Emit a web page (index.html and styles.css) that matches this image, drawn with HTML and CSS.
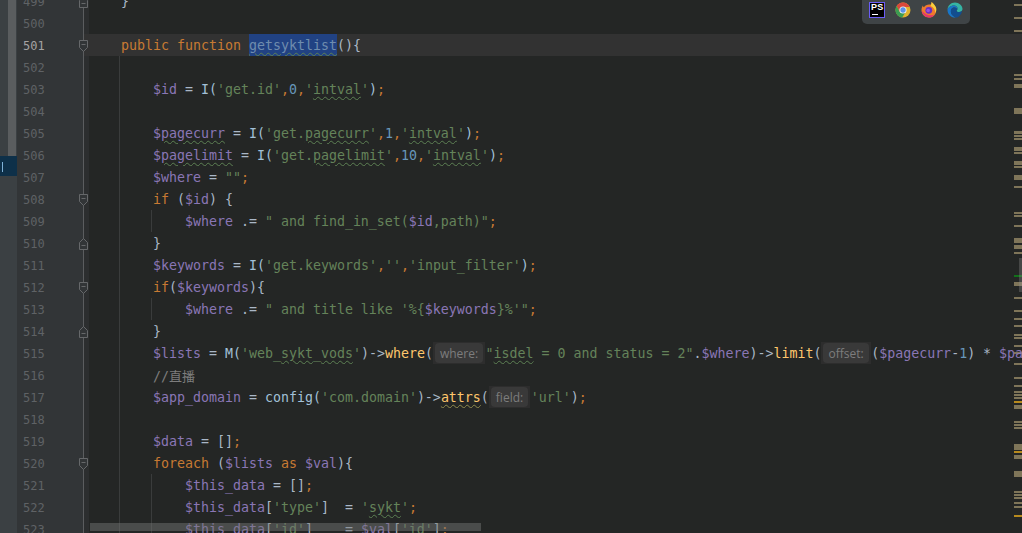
FILE: index.html
```html
<!DOCTYPE html>
<html lang="en">
<head>
<meta charset="utf-8">
<title>PhpStorm editor</title>
<link rel="stylesheet" href="styles.css">
</head>
<body>
<svg class="defs" width="0" height="0" aria-hidden="true">
  <symbol id="fold-open" viewBox="0 0 9 12"><path d="M.5.5h8v7l-4 4-4-4z"/><path d="M2.5 4.5h4"/></symbol>
  <symbol id="fold-close" viewBox="0 0 9 12"><path d="M.5 11.5h8v-7l-4-4-4 4z"/><path d="M2.5 7.5h4"/></symbol>
</svg>
<div class="app">
  <aside class="side">
    <div class="side-track"></div>
    <div class="side-thumb"></div>
    <div class="side-item"><i class="side-caret"></i></div>
  </aside>
  <main class="editor">
    <div class="lines">
      <div class="row"><div class="gut"><span class="num">499</span><svg class="fold"><use href="#fold-close"/></svg></div><div class="code">    }</div></div>
      <div class="row"><div class="gut"><span class="num">500</span></div><div class="code"></div></div>
      <div class="row cur"><div class="gut"><span class="num">501</span><svg class="fold"><use href="#fold-open"/></svg></div><div class="code">    <span class="k">public function</span> <span class="sel w">getsyktlist</span>(){</div></div>
      <div class="row g1"><div class="gut"><span class="num">502</span></div><div class="code"></div></div>
      <div class="row g1"><div class="gut"><span class="num">503</span></div><div class="code">        <span class="v">$id</span> = <span class="f">I(</span><span class="s">'get.id'</span><span class="k">,</span><span class="n">0</span><span class="k">,</span><span class="s">'<span class="w">intval</span>'</span><span class="f">)</span><span class="k">;</span></div></div>
      <div class="row g1"><div class="gut"><span class="num">504</span></div><div class="code"></div></div>
      <div class="row g1"><div class="gut"><span class="num">505</span></div><div class="code">        <span class="v">$<span class="w">pagecurr</span></span> = <span class="f">I(</span><span class="s">'get.<span class="w">pagecurr</span>'</span><span class="k">,</span><span class="n">1</span><span class="k">,</span><span class="s">'<span class="w">intval</span>'</span><span class="f">)</span><span class="k">;</span></div></div>
      <div class="row g1"><div class="gut"><span class="num">506</span></div><div class="code">        <span class="v">$<span class="w">pagelimit</span></span> = <span class="f">I(</span><span class="s">'get.<span class="w">pagelimit</span>'</span><span class="k">,</span><span class="n">10</span><span class="k">,</span><span class="s">'<span class="w">intval</span>'</span><span class="f">)</span><span class="k">;</span></div></div>
      <div class="row g1"><div class="gut"><span class="num">507</span></div><div class="code">        <span class="v">$where</span> = <span class="s">""</span><span class="k">;</span></div></div>
      <div class="row g1"><div class="gut"><span class="num">508</span><svg class="fold"><use href="#fold-open"/></svg></div><div class="code">        <span class="k">if</span> (<span class="v">$id</span>) {</div></div>
      <div class="row g2"><div class="gut"><span class="num">509</span></div><div class="code">            <span class="v">$where</span> .= <span class="s">" and find_in_set(<span class="v">$id</span>,path)"</span><span class="k">;</span></div></div>
      <div class="row g1"><div class="gut"><span class="num">510</span><svg class="fold"><use href="#fold-close"/></svg></div><div class="code">        }</div></div>
      <div class="row g1"><div class="gut"><span class="num">511</span></div><div class="code">        <span class="v">$keywords</span> = <span class="f">I(</span><span class="s">'get.keywords'</span><span class="k">,</span><span class="s">''</span><span class="k">,</span><span class="s">'input_filter'</span><span class="f">)</span><span class="k">;</span></div></div>
      <div class="row g1"><div class="gut"><span class="num">512</span><svg class="fold"><use href="#fold-open"/></svg></div><div class="code">        <span class="k">if</span>(<span class="v">$keywords</span>){</div></div>
      <div class="row g2"><div class="gut"><span class="num">513</span></div><div class="code">            <span class="v">$where</span> .= <span class="s">" and title like '%{<span class="v">$keywords</span>}%'"</span><span class="k">;</span></div></div>
      <div class="row g1"><div class="gut"><span class="num">514</span><svg class="fold"><use href="#fold-close"/></svg></div><div class="code">        }</div></div>
      <div class="row g1"><div class="gut"><span class="num">515</span></div><div class="code">        <span class="v">$lists</span> = <span class="f">M(</span><span class="s">'web_<span class="w">sykt</span>_<span class="w">vods</span>'</span>)-&gt;<span class="m">where</span>(<span class="hint"><span class="hint-in">where:</span></span><span class="s">"<span class="w">isdel</span> = 0 and status = 2"</span>.<span class="v">$where</span>)-&gt;<span class="m">limit</span>(<span class="hint"><span class="hint-in">offset:</span></span>(<span class="v">$pagecurr</span>-<span class="n">1</span>) * <span class="v">$pagelimit</span>,<span class="v">$pagelimit</span>)</div></div>
      <div class="row g1"><div class="gut"><span class="num">516</span></div><div class="code">        <span class="c">//<span class="cjk">直播</span></span></div></div>
      <div class="row g1"><div class="gut"><span class="num">517</span></div><div class="code">        <span class="v">$app_domain</span> = <span class="f">config(</span><span class="s">'com.domain'</span>)-&gt;<span class="m w-y">attrs</span>(<span class="hint"><span class="hint-in">field:</span></span><span class="s">'url'</span>)<span class="k">;</span></div></div>
      <div class="row g1"><div class="gut"><span class="num">518</span></div><div class="code"></div></div>
      <div class="row g1"><div class="gut"><span class="num">519</span></div><div class="code">        <span class="v">$data</span> = []<span class="k">;</span></div></div>
      <div class="row g1"><div class="gut"><span class="num">520</span><svg class="fold"><use href="#fold-open"/></svg></div><div class="code">        <span class="k">foreach</span> (<span class="v">$lists</span> <span class="k">as</span> <span class="v">$val</span>){</div></div>
      <div class="row g2"><div class="gut"><span class="num">521</span></div><div class="code">            <span class="v">$this_data</span> = []<span class="k">;</span></div></div>
      <div class="row g2"><div class="gut"><span class="num">522</span></div><div class="code">            <span class="v">$this_data</span>[<span class="s">'type'</span>]  = <span class="s">'<span class="w">sykt</span>'</span><span class="k">;</span></div></div>
      <div class="row g2"><div class="gut"><span class="num">523</span></div><div class="code">            <span class="v">$this_data</span>[<span class="s">'id'</span>]    = <span class="v">$val</span>[<span class="s">'id'</span>]<span class="k">;</span></div></div>
    </div>

    <div class="stripe">
      <i style="top:4px;height:2px"></i><i style="top:17px;height:2px"></i><i style="top:30px;height:2px"></i><i style="top:40px;height:2px"></i><i style="top:49px;height:2px"></i>
      <i style="top:74px;height:2px"></i><i style="top:78px;height:2px"></i><i style="top:84px;height:4px"></i><i style="top:108px;height:6px"></i>
      <i style="top:131px;height:3px"></i><i style="top:135px;height:2px"></i><i style="top:138px;height:2px"></i><i style="top:147px;height:4px"></i><i style="top:152px;height:2px"></i>
      <i style="top:161px;height:4px"></i><i style="top:166px;height:2px"></i><i style="top:175px;height:5px"></i><i style="top:186px;height:2px"></i>
      <i style="top:212px;height:2px"></i><i style="top:215px;height:2px"></i><i style="top:225px;height:2px"></i><i style="top:238px;height:5px"></i><i style="top:245px;height:4px"></i><i style="top:252px;height:2px"></i>
      <i class="green" style="top:275px;height:2px"></i><i style="top:282px;height:4px"></i><i style="top:297px;height:2px"></i><i style="top:310px;height:2px"></i><i style="top:318px;height:2px"></i><i style="top:325px;height:2px"></i>
      <i style="top:334px;height:2px"></i><i style="top:337px;height:2px"></i><i style="top:345px;height:2px"></i><i style="top:352px;height:2px"></i><i style="top:363px;height:2px"></i><i style="top:377px;height:2px"></i><i style="top:385px;height:2px"></i>
      <i style="top:391px;height:2px"></i><i style="top:394px;height:2px"></i><i style="top:397px;height:2px"></i><i class="gold" style="top:401px;height:2px"></i><i style="top:405px;height:4px"></i>
      <i style="top:421px;height:2px"></i><i style="top:424px;height:2px"></i><i style="top:427px;height:2px"></i><i style="top:444px;height:6px"></i><i class="gold" style="top:451px;height:2px"></i><i style="top:455px;height:4px"></i>
      <i style="top:471px;height:6px"></i><i style="top:491px;height:2px"></i><i style="top:494px;height:2px"></i><i style="top:497px;height:2px"></i><i style="top:502px;height:2px"></i><i style="top:506px;height:2px"></i><i class="gold" style="top:515px;height:2px"></i>
      <b class="stripe-thumb"></b>
    </div>

    <div class="hscroll"></div>

    <nav class="dock">
      <div class="ps"><span class="ps-t">PS</span><i class="ps-u"></i></div>
      <svg class="app-ico" viewBox="0 0 16 16">
        <circle cx="8" cy="8" r="7.5" fill="#e0b32c"/>
        <path d="M8 .5A7.5 7.5 0 0 0 1.6 4L4.8 10 8 5h6.600A7.500 7.500 0 0 0 8 .5z" fill="#d9483b"/>
        <path d="M1.600 4A7.500 7.500 0 0 0 7.200 15.500L10.400 10.200 4.800 10z" fill="#3b9c52"/>
        <circle cx="8" cy="8" r="3.600" fill="#f3f3f3"/>
        <circle cx="8" cy="8" r="2.700" fill="#5a93e8"/>
      </svg>
      <svg class="app-ico" viewBox="0 0 16 16">
        <path d="M8 2.500C11 3 10.500 1 10.500 0c2 1.500 3.800 3.800 4.500 5.500 1.200 4.500-1.500 10-7 10C3.500 15.500 .5 12 .5 8 .5 6 1.200 4.500 2 3.500c0 1 .5 1.500 1 1.800C4 3.500 6 2.500 8 2.500z" fill="#ef7a2c"/>
        <path d="M10.500 0c2 1.500 3.800 3.800 4.500 5.500.5 2 .2 4-.7 5.500C14 7 12.500 5 9.500 4 10.300 2.500 10.500 1 10.500 0z" fill="#f7cf3d"/>
        <path d="M.8 9c.6 3.500 3.400 6.500 7.200 6.500 2.500 0 4.500-1.200 5.700-3C11 14 6 14 .8 9z" fill="#e5376d"/>
        <circle cx="7.800" cy="8.300" r="3.400" fill="#6a2fc0"/>
        <circle cx="7.200" cy="8.500" r="1.800" fill="#9a4fe0"/>
      </svg>
      <svg class="app-ico" viewBox="0 0 16 16">
        <path d="M.5 8C.5 3.800 3.800.5 8 .5c4 0 7.500 3 7.500 6.500 0 2-1.700 3-3.500 3-1.500 0-2.500-.6-2.500-1.300 0-.7 1-1 1-2.300C10.500 5 9 3.500 7 3.500 3.500 3.500.5 6 .5 8z" fill="#35b4a4"/>
        <path d="M.5 8c0-2 3-4.500 6.500-4.500 2 0 3.500 1.500 3.500 3.200 0 .2 0 .3-.1.500C9 5.500 7.500 5.200 6 5.800 4.300 6.500 3.500 8.300 4 10.500c.5 2.300 2.500 4.300 5 5-.3 0-.7.1-1 .1C3.800 15.500.5 12.200.5 8z" fill="#1877c9"/>
        <path d="M4 10.500c-.5-2.200.3-4 2-4.700 1.500-.6 3-.3 4.400 1.400-.3.600-.900.900-.900 1.500 0 .7 1 1.300 2.500 1.300 1.200 0 2.400-.4 3.100-1.300-.4 3.200-3 6.800-6.100 6.800-2.500-.7-4.500-2.700-5-5z" fill="#124d8f"/>
      </svg>
    </nav>
  </main>
</div>
</body>
</html>
```
FILE: styles.css
```css
* { box-sizing: border-box; }
html, body { margin: 0; height: 100%; overflow: hidden; background: #242625; }
.defs { position: absolute; }

.app { display: flex; height: 533px; overflow: hidden; }

/* left tool strip */
.side { position: relative; display: flex; flex: 0 0 17px; background: #3b4043; }
.side-track { flex: 0 0 8px; }
.side-thumb { flex: 0 0 8px; height: 158px; background: #5a5d5f; }
.side-item { position: absolute; left: 0; right: 0; top: 156px; height: 20px; background: #0e3049; }
.side-caret { position: absolute; left: 2px; top: 6px; width: 1px; height: 10px; background: #7fb2d8; }

/* editor */
.editor { position: relative; flex: 1; min-width: 0; overflow: hidden; }
.lines { position: relative; z-index: 1; margin-top: -10px; }
.row {
  display: flex;
  height: 22px;
  font: 13.29px/24px "DejaVu Sans Mono", "Liberation Mono", monospace;
  color: #a9b7c6;
}
.gut {
  display: flex;
  align-items: center;
  flex: 0 0 72px;
  background: linear-gradient(to right, #323537 0 66px, #5b5d5f 66px 67px, #2c2e2f 67px);
}
.num { align-self: flex-start; padding-left: 6px; font-size: 12px; color: #5f6265; }
.fold { width: 9px; height: 12px; margin-left: auto; margin-right: 1px; margin-top: 2px; fill: #323537; stroke: #66686a; stroke-width: 1; overflow: visible; }

.code { flex: 1; min-width: 0; white-space: pre; overflow: hidden; }
.cur .code { background: #323232; }
.cur .gut { background: linear-gradient(to right, #323537 0 66px, #5b5d5f 66px 67px, #323232 67px); }
.cur .num { color: #a4a3a3; }
.g1 .code { background: linear-gradient(#3a3c3c, #3a3c3c) 30px 0 / 1px 100% no-repeat; }
.g2 .code {
  background:
    linear-gradient(#3a3c3c, #3a3c3c) 30px 0 / 1px 100% no-repeat,
    linear-gradient(#3a3c3c, #3a3c3c) 62px 0 / 1px 100% no-repeat;
}

/* syntax */
.k { color: #c77a33; }
.v { color: #8a76b5; }
.s { color: #64835a; }
.s .v { color: #8a76b5; }
.n { color: #6897bb; }
.f { color: #a2c0d8; }
.m { color: #ffc66d; }
.c { color: #7d7d7d; }
.cjk { font-family: "Noto Sans CJK SC", sans-serif; font-size: 13px; }
.w { text-decoration: underline wavy #5d8053 1px; text-underline-offset: 2px; }
.w-y { text-decoration: underline wavy #8f8a4d 1px; text-underline-offset: 2px; }
.sel { display: inline-block; height: 22px; vertical-align: top; background: #214283; color: #6f8cae; }

/* inlay hints */
.hint { display: inline-block; height: 22px; padding: 1px 2px; margin: 0 .5px 0 0; vertical-align: top; background: #2d2d2d; }
.hint-in {
  display: block;
  height: 20px;
  padding: 0 5px;
  border-radius: 4px;
  background: #393939;
  font: 12px/21px "Open Sans", sans-serif;
  color: #7d7d7d;
}

/* right error stripe */
.stripe { position: absolute; top: 0; right: 0; bottom: 0; width: 8px; }
.stripe i { position: absolute; left: 0; right: 0; background: #7f7559; }
.stripe i.gold { background: #b78a1e; }
.stripe i.green { background: #12701a; }
.stripe-thumb { position: absolute; right: 0; top: 258px; width: 3px; height: 34px; background: rgba(150,150,150,.3); }

/* horizontal scrollbar */
.hscroll { position: absolute; z-index: 2; left: 73px; bottom: 2px; width: 391px; height: 8px; background: rgba(118,120,118,.48); }

/* dock */
.dock {
  position: absolute;
  z-index: 3;
  top: 0;
  right: 52px;
  display: flex;
  align-items: flex-start;
  gap: 10px;
  width: 108px;
  height: 24px;
  padding: 2px 7px 0;
  border-radius: 0 0 5px 5px;
  background: #3f4446;
}
.ps { position: relative; flex: none; width: 16px; height: 16px; background: #000; border: 1px solid #6a5cf5; }
.ps-t { display: block; font: 700 9px/9px "Liberation Sans", sans-serif; color: #fff; padding-left: 1px; letter-spacing: .2px; }
.ps-u { position: absolute; left: 2px; bottom: 2px; width: 6px; height: 1px; background: #fff; }
.app-ico { flex: none; width: 16px; height: 16px; }
```
